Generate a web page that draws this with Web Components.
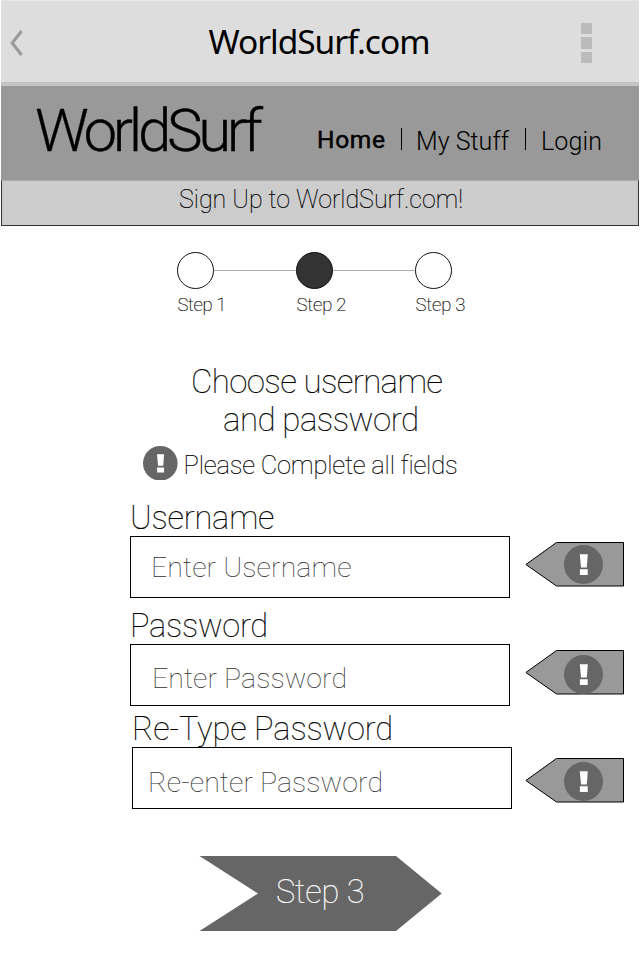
<!DOCTYPE html>
<html lang="en">
<head>
<meta charset="utf-8">
<title>WorldSurf.com</title>
<style>
html,body{margin:0;background:#fff}
body{width:640px;height:960px;overflow:hidden;font-family:Roboto,"Liberation Sans",sans-serif;color:#000}
</style>
</head>
<body>
<ws-page></ws-page>
<script>
const define = (name, html, setup) => customElements.define(name, class extends HTMLElement {
  connectedCallback() {
    if (this.shadowRoot) return;
    const t = document.createElement('template');
    t.innerHTML = html;
    this.attachShadow({mode: 'open'}).append(t.content.cloneNode(true));
    if (setup) setup(this, this.shadowRoot);
  }
});

/* One line of text, tracked so that it takes the width given in "fit". */
define('ws-text', `<style>
:host{display:block;line-height:1;white-space:nowrap;flex:none}
span{display:inline-block}
</style><span><slot></slot></span>`, (el, root) => {
  const span = root.querySelector('span');
  const size = el.getAttribute('size'), fit = +el.getAttribute('fit');
  const weight = el.getAttribute('weight') || 100;
  el.style.fontSize = size + 'px';
  el.style.fontWeight = weight;
  el.style.height = size + 'px';
  if (weight == 100) el.style.webkitTextStroke = 'var(--stroke, 0.2px)';
  if (fit) {
    el.style.width = fit + 'px';
    const text = root.querySelector('slot').assignedNodes({flatten: true}).map(n => n.textContent).join('');
    const gap = (fit - span.getBoundingClientRect().width) / (text.length - 1);
    span.style.letterSpacing = gap + 'px';
  }
});

define('ws-alert', `<style>
:host{display:block;flex:none;width:39px;height:39px}
svg{display:block;width:100%;height:100%}
</style><svg viewBox="0 0 39 39"><circle cx="19.5" cy="19.5" r="19.5" fill="#666"/><path d="M15.8 9.2h8l-1 13.2h-5.8zM15.9 24.3h7.8v5.6h-7.8z" fill="#fff"/></svg>`);

define('ws-titlebar', `<style>
:host{display:flex;box-sizing:border-box;height:86px;background:#ddd;border-top:1px solid #e8e8e8;border-bottom:4px solid #c4c4c4;justify-content:space-between;padding:0 47px 0 8px}
.back{width:14px;height:26px;margin-top:29px}
.menu{display:flex;flex-direction:column;gap:3px;margin-top:22px}
i{width:11px;height:11.4px;background:#bbb}
ws-text{font-family:"Noto Sans","Open Sans",sans-serif;margin:23.5px 0 0 35px}
</style><svg class="back" viewBox="0 0 14 26"><path d="M12.6 1L3.2 13L12.6 25" fill="none" stroke="#999" stroke-width="3"/></svg>
<ws-text size="33.5" weight="400" fit="222">WorldSurf.com</ws-text><div class="menu"><i></i><i></i><i></i></div>`);

define('ws-nav', `<style>
:host{display:flex;box-sizing:border-box;height:94px;background:#999;align-items:flex-start;padding-left:34px}
nav{display:flex;margin:42px 0 0 54px;align-items:flex-start}
i{width:1px;height:22px;background:#000}
.logo{margin-top:14.6px;-webkit-text-stroke:.3px}
.low{margin-top:1px}
.home{-webkit-text-stroke:.5px}
</style><ws-text class="logo" size="60" weight="300" fit="228">WorldSurf</ws-text>
<nav><ws-text class="home" size="24.5" weight="400" fit="68">Home</ws-text><i style="margin:0 14px 0 16px"></i><ws-text class="low" size="25" weight="300" fit="93">My Stuff</ws-text><i style="margin:0 15px 0 16px"></i><ws-text class="low" size="25" weight="300" fit="61">Login</ws-text></nav>`);

define('ws-banner', `<style>
:host{display:block;box-sizing:border-box;height:46px;background:#ccc;border:1px solid #333;border-top:1px solid #aaa;padding:6px 0 0 177px}
</style><ws-text size="25" fit="284"><slot></slot></ws-text>`);

define('ws-steps', `<style>
:host{display:flex;margin:26px 0 0 176px;align-items:flex-start}
div{width:37px;flex:none}
b{display:block;box-sizing:border-box;width:37px;height:37px;border:1.3px solid #111;border-radius:50%;margin-bottom:6.5px}
.on{background:#333}
i{width:82px;height:1px;background:#aaa;margin-top:18px}
ws-text{margin-left:.5px}
</style><div><b></b><ws-text size="18.5" fit="49">Step 1</ws-text></div><i></i><div><b class="on"></b><ws-text size="18.5" fit="50">Step 2</ws-text></div><i></i><div><b></b><ws-text size="18.5" fit="50">Step 3</ws-text></div>`);

define('ws-intro', `<style>
:host{display:block;margin-top:50.5px}
.a{margin-left:190px}.b{margin:5px 0 0 222px}
.row{display:flex;margin:10px 0 0 142px;align-items:flex-start}
ws-alert{width:34.6px;height:34.6px}
.row ws-text{margin:7.5px 0 0 6px}
</style><ws-text class="a" size="33" fit="252">Choose username</ws-text><ws-text class="b" size="33" fit="196">and password</ws-text>
<div class="row"><ws-alert></ws-alert><ws-text size="25.5" fit="274">Please Complete all fields</ws-text></div>`);

define('ws-tag', `<style>
:host{display:grid;flex:none;width:99px;height:45px}
svg,ws-alert{grid-area:1/1}
ws-alert{margin:var(--dot,3px) 0 0 38.5px}
</style><svg width="99" height="45"><path d="M.9 22.5L31.5 .5H98.5V44H31.5z" fill="#999" stroke="#000"/></svg><ws-alert></ws-alert>`);

define('ws-field', `<style>
:host{display:block;flex:none}
.row{display:flex;align-items:flex-start}
.box{box-sizing:border-box;width:380px;height:61.5px;border:1px solid #000;color:#333;flex:none;--stroke:0}
</style><ws-text class="label" size="32.5"></ws-text><div class="row"><div class="box"><ws-text class="hint" size="28.5"></ws-text></div><ws-tag></ws-tag></div>`, (el, root) => {
  const [lw, hw, hx, hy, tx, ty] = el.dataset.metrics.split(' ').map(Number);
  const make = (old, text, fit) => {
    const n = document.createElement('ws-text');
    n.setAttribute('size', old.getAttribute('size'));
    n.setAttribute('fit', fit);
    n.textContent = text;
    old.replaceWith(n);
    return n;
  };
  make(root.querySelector('.label'), el.getAttribute('label'), lw).style.marginBottom = '1.5px';
  make(root.querySelector('.hint'), el.getAttribute('hint'), hw).style.margin = hy + 'px 0 0 ' + hx + 'px';
  root.querySelector('ws-tag').style.margin = ty + 'px 0 0 ' + tx + 'px';
});

define('ws-next', `<style>
:host{display:grid;width:243px;height:75px;margin:47.5px 0 0 198px;color:#fff}
svg,ws-text{grid-area:1/1}
ws-text{margin:19.5px 0 0 77px}
</style><svg width="243" height="75"><path d="M.5 0H197L242.7 37.5L197 75H.5L59 37.5z" fill="#666"/></svg><ws-text size="32.5" fit="88.5"><slot></slot></ws-text>`);

define('ws-page', `<style>
:host{display:flex;flex-direction:column;box-sizing:border-box;width:640px;height:960px;padding:0 1px;overflow:hidden;background:#fff}
ws-field{margin-left:129px}
</style>
<ws-titlebar></ws-titlebar><ws-nav></ws-nav><ws-banner>Sign Up to WorldSurf.com!</ws-banner>
<ws-steps></ws-steps><ws-intro></ws-intro>
<ws-field style="margin-top:22px" label="Username" hint="Enter Username" data-metrics="144.5 200.5 20 17 15 6"></ws-field>
<ws-field style="margin-top:12.5px;--dot:5px" label="Password" hint="Enter Password" data-metrics="138 195 21 20 15 6"></ws-field>
<ws-field style="margin:7.5px 0 0 131px;--dot:4px" label="Re-Type Password" hint="Re-enter Password" data-metrics="261 235 15 21 13 11"></ws-field>
<ws-next>Step 3</ws-next>`);
</script>
</body>
</html>
